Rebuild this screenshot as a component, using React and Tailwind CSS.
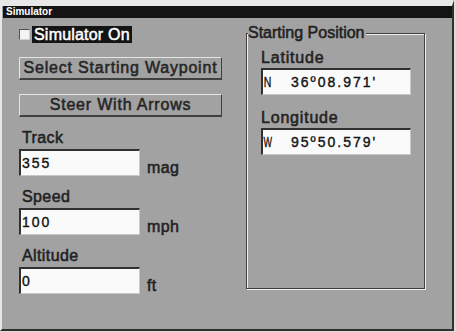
const label = 'text-[16px] text-[#222] leading-[18px] [-webkit-text-stroke:0.55px_#222]'
const input =
  'bg-[#fafafa] border-t-2 border-l-2 border-[#303030] border-r border-b border-r-[#c8c8c8] border-b-[#c8c8c8] flex items-center text-[14px] text-[#141414] leading-[16px] tracking-[2px] [-webkit-text-stroke:0.4px_#141414]'
const button =
  'w-[203px] h-[23px] border border-[#e4e4e4] border-r-[#404040] border-b-[#404040] border-b-2 text-[16px] text-[#262626] leading-[20px] tracking-[0.8px] [-webkit-text-stroke:0.55px_#262626]'

export default function App() {
  const font = { fontFamily: '"Liberation Sans", Arial, sans-serif' }

  return (
    <div className="w-[456px] h-[332px] bg-[#dcdcdc]" style={font}>
      <div className="w-[454px] h-[331px] border-l-[2px] border-t-[6px] border-[#e8e8e8] flex flex-col bg-[#a2a2a2] border-r-[2px] border-b-[2px] border-r-[#303030] border-b-[#303030]">
        {/* title bar */}
        <div className="h-[12px] ml-[1px] bg-[#141414] text-white text-[10px] font-bold leading-[12px] pl-[3px]">
          Simulator
        </div>

        <div className="flex flex-1">
          {/* left column */}
          <div className="w-[240px] pl-[17px] pt-[8px] flex flex-col">
            <div className="flex items-center h-[17px]">
              <span className="w-[11px] h-[11px] bg-[#f4f4f4] border border-[#505050] border-r-[#d0d0d0] border-b-[#d0d0d0]" />
              <span className="ml-[2px] h-[17px] bg-[#141414] text-white text-[16px] leading-[17px] px-[2px] tracking-[0.2px] [-webkit-text-stroke:0.5px_#fff]">
                Simulator On
              </span>
            </div>

            <button className={`mt-[14px] ${button}`}>Select Starting Waypoint</button>
            <button className={`mt-[14px] ${button}`}>Steer With Arrows</button>

            <Field label="Track" value="355" unit="mag" />
            <Field label="Speed" value="100" unit="mph" />
            <Field label="Altitude" value="0" unit="ft" />
          </div>

          {/* right column */}
          <div className="flex-1 pt-[15px] pl-[4px]">
            <div className="relative w-[179px] h-[256px] border border-[#404040] shadow-[inset_1px_1px_0_#f0f0f0,1px_1px_0_#f0f0f0]">
              <span className={`absolute -top-[10px] left-[1px] bg-[#a2a2a2] pr-[1px] ${label}`}>
                Starting Position
              </span>
              <div className="pl-[14px] pt-[15px] flex flex-col">
                <span className={`${label} tracking-[0.8px]`}>Latitude</span>
                <div className={`mt-[1px] w-[150px] h-[27px] ${input}`}>
                  <span className="w-[28px] pl-[1px] text-[15px] scale-x-[0.7] origin-left">N</span>
                  <span>36º08.971'</span>
                </div>
                <span className={`mt-[14px] ${label} tracking-[0.8px]`}>Longitude</span>
                <div className={`mt-[1px] w-[150px] h-[27px] ${input}`}>
                  <span className="w-[28px] pl-[1px] text-[15px] scale-x-[0.6] origin-left">W</span>
                  <span>95º50.579'</span>
                </div>
              </div>
            </div>
          </div>
        </div>
      </div>
    </div>
  )
}

function Field({ label: text, value, unit }) {
  return (
    <div className="mt-[12px]">
      <div className={`pl-[3px] ${label} tracking-[0.4px]`}>{text}</div>
      <div className="flex items-end mt-[2px]">
        <div className={`w-[121px] h-[27px] pl-[1px] ${input}`}>{value}</div>
        <span className={`ml-[7px] -mb-[1px] ${label} tracking-[0.4px]`}>{unit}</span>
      </div>
    </div>
  )
}
